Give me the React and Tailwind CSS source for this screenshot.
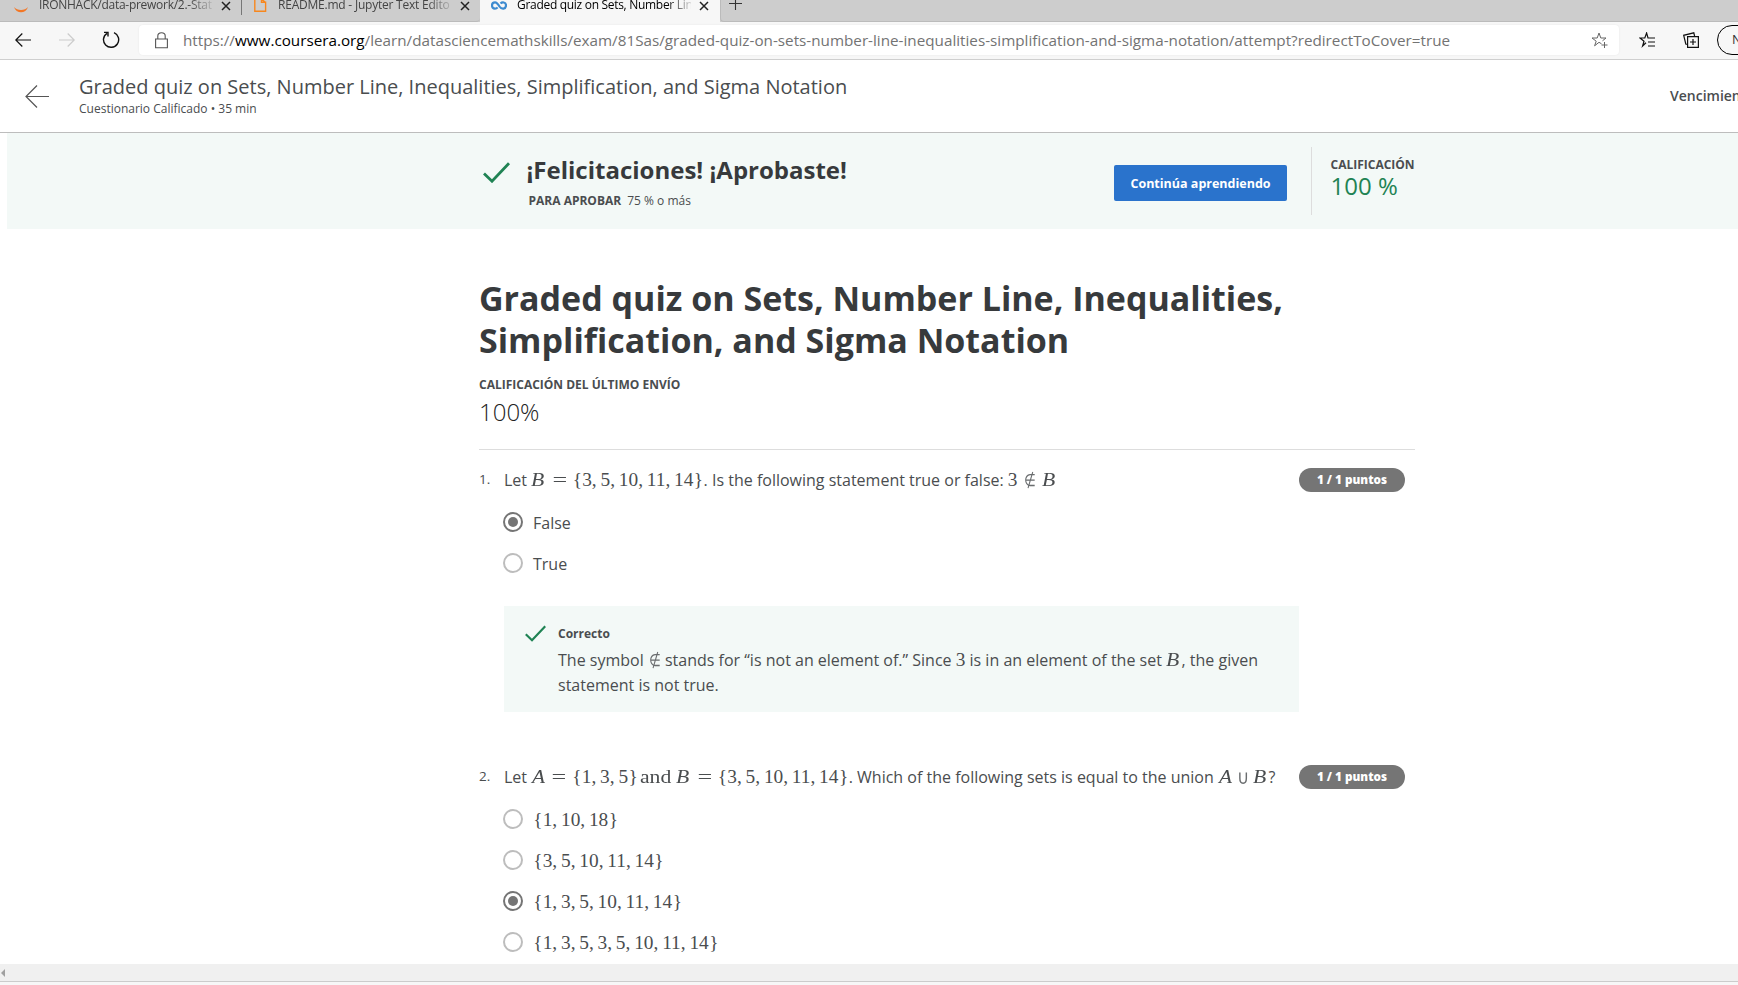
import React from "react";

const WIDTHS = {
  A: "w-[0.78em] scale-x-[1.1] text-center italic",
  B: "w-[0.8em] scale-x-[1.12] origin-left text-left italic",
  "{": "w-[0.5em] text-center",
  "}": "w-[0.53em] text-center",
  ",": "w-[0.4447em] text-left",
  "=": "w-[1.334em] scale-x-[1.35] text-center",
  and: "w-[36px] scale-x-[1.12] origin-left text-left",
};

/* Typeset math: every operator gets a fixed advance, digits keep their own. */
function M({ t }) {
  const parts = t.split(/([AB{},=∉∪]|and)/).filter(Boolean);
  return (
    <span className="whitespace-pre font-['Liberation_Serif',serif] text-[19.36px] leading-none">
      {parts.map((p, i) => {
        if (p === "∉") return <NotIn key={i} wide />;
        if (p === "∪") return <Union key={i} />;
        return WIDTHS[p] ? (
          <span key={i} className={"inline-block " + WIDTHS[p]}>{p}</span>
        ) : (
          <span key={i}>{p}</span>
        );
      })}
    </span>
  );
}

function NotIn({ wide }) {
  return (
    <span
      className={
        "inline-block scale-x-[0.8] text-center font-['DejaVu_Sans',sans-serif] text-[17px] font-extralight leading-none text-[#6a6d6f] " +
        (wide ? "w-[24px]" : "w-[13px]")
      }
    >
      ∉
    </span>
  );
}

function Union() {
  return (
    <span className="inline-block w-[20px] scale-y-[1.2] text-center font-['DejaVu_Sans',sans-serif] text-[17px] font-extralight leading-none text-[#6a6d6f]">
      ∪
    </span>
  );
}

function Radio({ on }) {
  return (
    <span
      className={
        "mb-[2px] flex size-5 shrink-0 items-center justify-center rounded-full border-2 " +
        (on ? "border-[#757575]" : "border-[#bdbdbd]")
      }
    >
      {on && <span className="size-[10px] rounded-full bg-[#757575]" />}
    </span>
  );
}

function Option({ on, children }) {
  return (
    <div className="flex h-[41px] items-center pl-6">
      <Radio on={on} />
      <span className="ml-[10px] pt-px text-[16px] leading-6">{children}</span>
    </div>
  );
}

function Prompt({ n, children }) {
  return (
    <div className="flex h-6 w-[926px] items-start whitespace-nowrap">
      <span className="w-[25px] text-[13.5px] leading-[22px]">{n}.</span>
      <p className="h-6 flex-1 text-[16px] leading-6">{children}</p>
      <span className="flex h-6 w-[106px] items-center justify-center rounded-full bg-[#757575] text-[11.7px] font-extrabold text-white">
        1 / 1 puntos
      </span>
    </div>
  );
}

function Check({ className, w = 2 }) {
  return (
    <svg className={className} viewBox="0 0 27 21" fill="none" stroke="#1f8354" strokeWidth={w}>
      <path d="M1 11.5 9 19.2 26 1.2" />
    </svg>
  );
}

function Close({ className }) {
  return (
    <svg className={"size-[10px] shrink-0 " + className} viewBox="0 0 10 10" stroke="#222" strokeWidth="1.5">
      <path d="M1 1 9 9M9 1 1 9" />
    </svg>
  );
}

function TabTitle({ className, children }) {
  return (
    <span
      className={
        "mt-[-3px] whitespace-nowrap font-['Open_Sans',sans-serif] [mask-image:linear-gradient(to_right,black_86%,transparent_102%)] " +
        className
      }
    >
      {children}
    </span>
  );
}

function TabStrip() {
  return (
    <div className="flex h-[22px] shrink-0 overflow-hidden bg-[#cdcdcd] text-[12px] leading-4 text-[#444]">
      <div className="flex w-[241px] border-b border-[#bbb]">
        <svg className="ml-[13px] mt-[6px] h-[7px] w-4 shrink-0" viewBox="0 0 16 7">
          <path d="M1 1C4 5 12 5 15 1 13 8 3 8 1 1Z" fill="#f37726" />
        </svg>
        <TabTitle className="ml-[10px] w-[174px] tracking-[-0.27px]">IRONHACK/data-prework/2.-Stat</TabTitle>
        <Close className="ml-[8px] mt-px" />
      </div>
      <div className="flex w-[239px] rounded-br-[4px] border-b border-[#bbb]">
        <span className="h-[15px] w-px bg-[#777]" />
        <svg className="ml-[12px] h-[12px] w-[13px] shrink-0" viewBox="0 0 13 12" fill="none" stroke="#f7871e" strokeWidth="1.4">
          <path d="M.8-3V11.3H11.6V2.3H7.5V-3M7.5-1 11.6 2.6" />
        </svg>
        <TabTitle className="ml-[11px] w-[174px] tracking-[-0.22px]">README.md - Jupyter Text Edito</TabTitle>
        <Close className="ml-[8px] mt-px" />
      </div>
      <div className="flex w-[240px] bg-[#f7f7f7] text-black">
        <svg className="ml-[11px] mt-[1px] h-[9px] w-4 shrink-0" viewBox="0 0 16 9" fill="none" stroke="#3d8bd0" strokeWidth="2.2">
          <path d="M9.5 2.5C11 1 15 .8 15 4.3 15 8.5 10.5 8.5 8.5 5.5 6.5 2 5.5 1.3 4 1.3 0 1.3 0 7.7 4 7.7 5.2 7.7 6 7.2 6.6 6.4" />
        </svg>
        <TabTitle className="ml-[10px] w-[174px] tracking-[-0.3px]">Graded quiz on Sets, Number Lin</TabTitle>
        <Close className="ml-[8px] mt-px" />
      </div>
      <div className="flex flex-1 rounded-bl-[4px] border-b border-l border-[#bbb]">
        <svg className="ml-[8px] h-[10px] w-[13px]" viewBox="0 0 13 10" stroke="#333" strokeWidth="1.1">
          <path d="M0 3.5H13M6.5-3V10" />
        </svg>
      </div>
    </div>
  );
}

function Toolbar() {
  return (
    <div className="flex h-[38px] shrink-0 items-center border-b border-[#cfcfcf] bg-[#f7f7f7] pb-px">
      <svg className="mb-px ml-[15px] h-[14px] w-4 shrink-0" viewBox="0 0 16 14" fill="none" stroke="#111" strokeWidth="1.2">
        <path d="M16 7H.8M7.3.5.8 7 7.3 13.5" />
      </svg>
      <svg className="mb-px ml-[28px] h-[14px] w-4 shrink-0" viewBox="0 0 16 14" fill="none" stroke="#ccc" strokeWidth="1.2">
        <path d="M0 7H15.2M8.7.5 15.2 7 8.7 13.5" />
      </svg>
      <svg className="mb-px ml-[27px] size-[18px] shrink-0" viewBox="0 0 18 18" fill="none" stroke="#111" strokeWidth="1.4">
        <path d="M12 1.7A7.6 7.6 0 1 1 5 2.3M2 1.4H6V5.5" />
      </svg>
      <div className="ml-[19px] flex h-[30px] w-[1480px] shrink-0 items-center rounded-[4px] bg-white shadow-[0_0_2px_#00000014]">
        <svg className="ml-[16px] h-[17px] w-[13px]" viewBox="0 0 13 17" fill="none" stroke="#555" strokeWidth="1.1">
          <path d="M.6 7H12.4V15.8H.6ZM2.8 7V4C2.8-.3 10.2-.3 10.2 4V7" />
        </svg>
        <span className="mb-px ml-[15px] w-[1268px] whitespace-nowrap font-['Open_Sans',sans-serif] text-[15.24px] leading-5 text-[#737373]">
          https://<span className="text-black">www.coursera.org</span>
          /learn/datasciencemathskills/exam/81Sas/graded-quiz-on-sets-number-line-inequalities-simplification-and-sigma-notation/attempt?redirectToCover=true
        </span>
        <svg className="ml-[140px] size-[17px]" viewBox="0 0 17 17" fill="none" stroke="#666" strokeWidth="1">
          <path d="M10.5 11.8 8 10.3 3.6 13.8 5.2 9.2 1 6H6.2L8 1 9.8 6H15L11.5 8.8M10.5 13H16.5M13.5 10V16" />
        </svg>
      </div>
      <svg className="ml-[20px] size-[17px] shrink-0" viewBox="0 0 17 17" fill="none" stroke="#111" strokeWidth="1.2">
        <path d="M7 10.8 3.6 14 5 9.2 1 6H5.8L7.6 1 9 6H16M9 10H16M9 14H16" />
      </svg>
      <svg className="ml-[27px] size-[16px] shrink-0" viewBox="0 0 16 16" fill="none" stroke="#111" strokeWidth="1.2">
        <path d="M4.6 4.6H15.4V15.4H4.6ZM10 7V13M7 10H13M3.8 12.5 2.8 12 .7 3.3 10.8.8 11.6 4" />
      </svg>
      <span className="ml-[18px] flex h-[30px] w-[80px] shrink-0 items-center rounded-full border border-black pl-[14px] font-['Open_Sans',sans-serif] text-[13px] text-[#333]">
        N
      </span>
    </div>
  );
}

export default function App() {
  return (
    <div className="flex h-[985px] w-[1738px] flex-col overflow-hidden bg-white font-['Open_Sans',sans-serif] text-[#4a4d4f]">
      <TabStrip />
      <Toolbar />
      <header className="flex h-[73px] shrink-0 items-start border-b border-[#bdbdbd]">
        <svg className="ml-[25px] mt-[25px] h-[23px] w-6 shrink-0" viewBox="0 0 24 23" fill="none" stroke="#555" strokeWidth="1.2">
          <path d="M24 11.5H1M12 .5 1 11.5 12 22.5" />
        </svg>
        <div className="ml-[30px] w-[1591px] shrink-0 pt-[13px]">
          <div className="text-[20px] leading-7">
            Graded quiz on Sets, Number Line, Inequalities, Simplification, and Sigma Notation
          </div>
          <div className="text-[12px] leading-4">Cuestionario Calificado • 35 min</div>
        </div>
        <span className="whitespace-nowrap pt-[26px] text-[14px] font-semibold leading-5">Vencimiento</span>
      </header>
      <section className="ml-[7px] flex h-24 shrink-0 bg-[#f3f9f7]">
        <Check className="ml-[476px] mt-[29px] h-[21px] w-[27px]" w={2.8} />
        <div className="ml-[16.5px] w-[587.5px] pt-[21px]">
          <div className="text-[24px] font-bold leading-8 text-[#373a3c]">¡Felicitaciones! ¡Aprobaste!</div>
          <div className="mt-[6px] pl-[2px] text-[12px] leading-[17px]">
            <span className="font-bold">PARA APROBAR</span>
            <span className="ml-[6px]">75 % o más</span>
          </div>
        </div>
        <button className="mt-8 h-9 w-[173px] rounded-[2px] bg-[#2a73cc] pt-[2px] text-[12.5px] font-bold leading-4 text-white">
          Continúa aprendiendo
        </button>
        <div className="ml-[24px] mt-[14px] h-[68px] border-l border-[#ddd] pl-[18.5px] pt-[10px]">
          <div className="text-[12px] font-bold leading-4">CALIFICACIÓN</div>
          <div className="text-[24px] leading-[26px] text-[#1f8354]">100 %</div>
        </div>
      </section>
      <main className="ml-[479px] h-[735px] w-[936px] shrink-0 overflow-hidden pt-[48px]">
        <h1 className="whitespace-nowrap text-[34px] font-bold leading-[42px] text-[#373a3c]">
          Graded quiz on Sets, Number Line, Inequalities,
          <br />
          Simplification, and Sigma Notation
        </h1>
        <div className="mt-[15px] text-[12px] font-bold leading-[18px]">CALIFICACIÓN DEL ÚLTIMO ENVÍO</div>
        <div className="mt-[2px] text-[24px] font-light leading-8 text-[#222]">100%</div>
        <hr className="mb-[18px] mt-[21px] border-t border-[#ddd]" />
        <Prompt n={1}>
          Let <M t="B={3,5,10,11,14}" />. Is the following statement true or false: <M t="3∉B" />
        </Prompt>
        <div className="mt-[10px]">
          <Option on>False</Option>
          <Option>True</Option>
        </div>
        <div className="ml-[25px] mt-[22px] flex h-[106px] w-[795px] bg-[#f3f9f7] pt-[20px]">
          <Check className="ml-[21px] mt-[-1px] h-[17px] w-[21px]" w={2.8} />
          <div className="ml-[12px] whitespace-nowrap">
            <div className="text-[12px] font-bold leading-4">Correcto</div>
            <p className="mt-[6px] text-[16px] leading-[25px]">
              The symbol <NotIn /> stands for “is not an element of.” Since <M t="3" /> is in an element of the set{" "}
              <M t="B" />, the given
              <br />
              statement is not true.
            </p>
          </div>
        </div>
        <div className="mt-[53px]">
          <Prompt n={2}>
            Let <M t="A={1,3,5}" />
            <span className="inline-block w-[2px]" />
            <M t="andB={3,5,10,11,14}" />. Which of the following sets is equal to the union <M t="A∪B" />?
          </Prompt>
        </div>
        <div className="mt-[10px]">
          <Option><M t="{1,10,18}" /></Option>
          <Option><M t="{3,5,10,11,14}" /></Option>
          <Option on><M t="{1,3,5,10,11,14}" /></Option>
          <Option><M t="{1,3,5,3,5,10,11,14}" /></Option>
        </div>
      </main>
      <div className="flex h-[17px] shrink-0 items-center bg-[#f0f0f0]">
        <svg className="ml-px h-[8px] w-1" viewBox="0 0 4 8">
          <path d="M4 0V8L0 4Z" fill="#a0a0a0" />
        </svg>
      </div>
      <div className="h-1 shrink-0 border-t border-[#ccc] bg-[#f7f7f7]" />
    </div>
  );
}
